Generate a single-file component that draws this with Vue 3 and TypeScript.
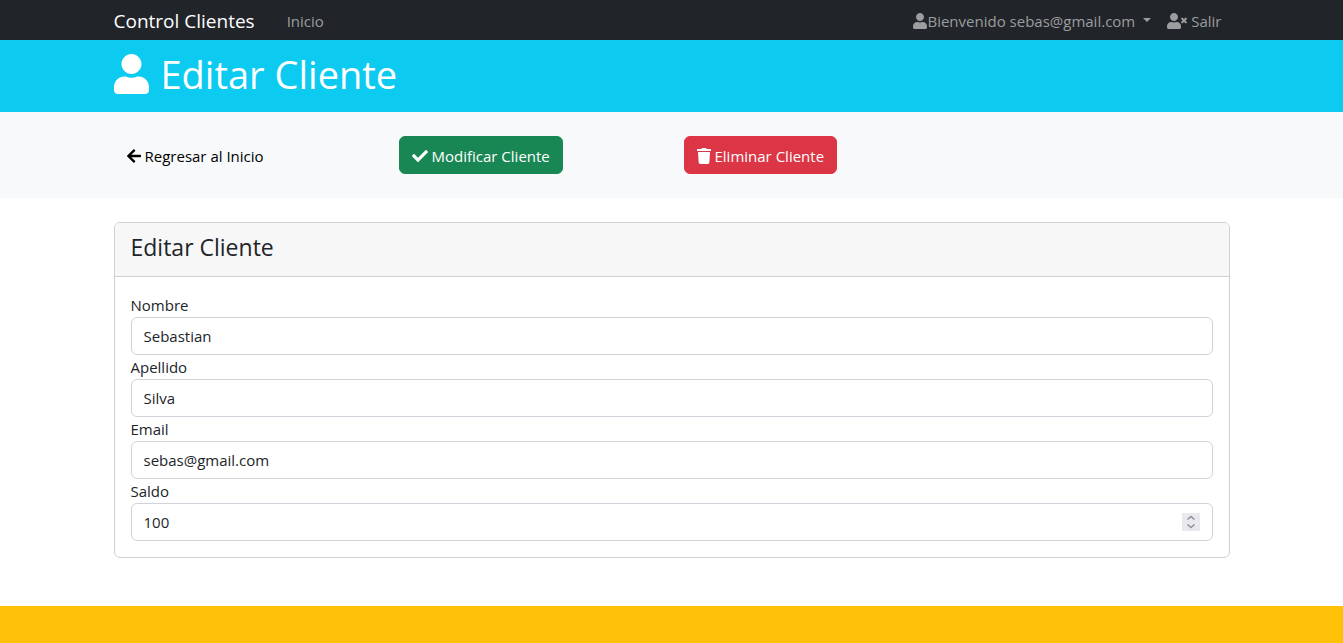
<script setup lang="ts">
import { reactive } from 'vue'

interface Cliente {
  nombre: string
  apellido: string
  email: string
  saldo: number
}

const cliente = reactive<Cliente>({
  nombre: 'Sebastian',
  apellido: 'Silva',
  email: 'sebas@gmail.com',
  saldo: 100,
})

const userPath =
  'M224 256c70.7 0 128-57.3 128-128S294.7 0 224 0 96 57.3 96 128s57.3 128 128 128zm89.6 32h-16.7c-22.2 10.2-46.9 16-72.9 16s-50.6-5.8-72.9-16h-16.7C60.2 288 0 348.2 0 422.4V464c0 26.5 21.5 48 48 48h352c26.5 0 48-21.5 48-48v-41.6c0-74.2-60.2-134.4-134.4-134.4z'
</script>

<template>
  <div class="page">
    <nav class="navbar">
      <div class="container navbar-row">
        <a class="brand" href="#">Control Clientes</a>
        <a class="nav-link" href="#">Inicio</a>
        <div class="nav-end">
          <button class="nav-link nav-user" type="button" aria-haspopup="true">
            <svg class="icon icon-user" viewBox="0 0 448 512" aria-hidden="true"><path :d="userPath" /></svg>
            <span>Bienvenido sebas@gmail.com</span>
            <span class="caret"></span>
          </button>
          <a class="nav-link nav-exit" href="#">
            <svg class="icon icon-exit" viewBox="0 0 640 512" aria-hidden="true">
              <path :d="userPath" />
              <path d="M589.6 240l45.6-45.6c6.3-6.3 6.3-16.5 0-22.8l-22.8-22.8c-6.3-6.3-16.5-6.3-22.8 0L544 194.4l-45.6-45.6c-6.3-6.3-16.5-6.3-22.8 0l-22.8 22.8c-6.3 6.3-6.3 16.5 0 22.8l45.6 45.6-45.6 45.6c-6.3 6.3-6.3 16.5 0 22.8l22.8 22.8c6.3 6.3 16.5 6.3 22.8 0l45.6-45.6 45.6 45.6c6.3 6.3 16.5 6.3 22.8 0l22.8-22.8c6.3-6.3 6.3-16.5 0-22.8L589.6 240z" />
            </svg>
            <span>Salir</span>
          </a>
        </div>
      </div>
    </nav>

    <header class="banner">
      <div class="container">
        <h1 class="title">
          <svg class="icon icon-title" viewBox="0 0 448 512" aria-hidden="true"><path :d="userPath" /></svg>
          <span>Editar Cliente</span>
        </h1>
      </div>
    </header>

    <section class="actions">
      <div class="container actions-grid">
        <div>
          <a class="btn btn-light" href="#">
            <svg class="icon icon-user" viewBox="0 0 448 512" aria-hidden="true">
              <path d="M257.5 445.1l-22.2 22.2c-9.4 9.4-24.6 9.4-33.9 0L7 273c-9.4-9.4-9.4-24.6 0-33.9L201.4 44.7c9.4-9.4 24.6-9.4 33.9 0l22.2 22.2c9.5 9.5 9.3 25-.4 34.3L136.6 216H424c13.3 0 24 10.7 24 24v32c0 13.3-10.7 24-24 24H136.6l120.5 114.8c9.8 9.3 10 24.8.4 34.3z" />
            </svg>
            <span>Regresar al Inicio</span>
          </a>
        </div>
        <div>
          <button class="btn btn-success" type="submit" form="cliente-form">
            <svg class="icon icon-check" viewBox="0 0 512 512" aria-hidden="true">
              <path d="M173.898 439.404l-166.4-166.4c-9.997-9.997-9.997-26.206 0-36.204l36.203-36.204c9.997-9.998 26.207-9.998 36.204 0L192 312.69 432.095 72.596c9.997-9.997 26.207-9.997 36.204 0l36.203 36.204c9.997 9.997 9.997 26.206 0 36.204l-294.4 294.401c-9.998 9.997-26.207 9.997-36.204-.001z" />
            </svg>
            <span>Modificar Cliente</span>
          </button>
        </div>
        <div>
          <button class="btn btn-danger" type="button">
            <svg class="icon icon-user" viewBox="0 0 448 512" aria-hidden="true">
              <path d="M432 32H312l-9.4-18.7A24 24 0 0 0 281.1 0H166.8a23.72 23.72 0 0 0-21.4 13.3L136 32H16A16 16 0 0 0 0 48v32a16 16 0 0 0 16 16h416a16 16 0 0 0 16-16V48a16 16 0 0 0-16-16zM53.2 467a48 48 0 0 0 47.9 45h245.8a48 48 0 0 0 47.9-45L416 128H32z" />
            </svg>
            <span>Eliminar Cliente</span>
          </button>
        </div>
      </div>
    </section>

    <main class="container">
      <div class="card">
        <div class="card-header"><h4 class="card-title">Editar Cliente</h4></div>
        <form id="cliente-form" class="card-body" @submit.prevent>
          <label for="nombre">Nombre</label>
          <input id="nombre" v-model="cliente.nombre" class="control" type="text" required />
          <label for="apellido">Apellido</label>
          <input id="apellido" v-model="cliente.apellido" class="control" type="text" required />
          <label for="email">Email</label>
          <input id="email" v-model="cliente.email" class="control" type="email" required />
          <label for="saldo">Saldo</label>
          <div class="number">
            <input id="saldo" v-model.number="cliente.saldo" class="control" type="number" required />
            <div class="spinner">
              <button type="button" aria-label="Aumentar saldo" @click="cliente.saldo++">
                <svg viewBox="0 0 18 9" aria-hidden="true"><path d="M5.5 6.5 9 3.5 12.5 6.5" /></svg>
              </button>
              <button type="button" aria-label="Reducir saldo" @click="cliente.saldo--">
                <svg viewBox="0 0 18 9" aria-hidden="true"><path d="M5.5 2.5 9 5.5 12.5 2.5" /></svg>
              </button>
            </div>
          </div>
        </form>
      </div>
    </main>

    <footer class="footer"></footer>
  </div>
</template>

<style>
body {
  margin: 0;
  background: #fff;
}
</style>

<style scoped>
.page {
  display: flex;
  flex-direction: column;
  min-height: 100vh;
  color: #212529;
  font-family: "Open Sans", "Noto Sans", sans-serif;
  font-size: 15px;
  line-height: 24px;
}

.page *,
.page *::before,
.page *::after {
  box-sizing: border-box;
}

.container {
  width: 100%;
  max-width: 1140px;
  margin: 0 auto;
  padding: 0 12px;
}

button,
input {
  font: inherit;
}

.icon {
  flex: none;
  height: 16px;
  fill: currentColor;
}

.icon-user {
  width: 14px;
}

.icon-check {
  width: 16px;
}

.icon-exit {
  width: 20px;
}

.navbar {
  padding-top: 2px;
  background: #212529;
}

.navbar-row {
  display: flex;
  align-items: center;
  height: 38px;
}

.brand {
  margin-right: 24px;
  color: #fff;
  font-size: 19px;
  text-decoration: none;
}

.nav-link {
  display: flex;
  align-items: center;
  padding: 0 8px;
  border: 0;
  background: none;
  color: #9b9d9e;
  text-decoration: none;
}

.nav-end {
  display: flex;
  margin-left: auto;
}

.caret {
  margin: 0 0 2px 8px;
  border-top: 4px solid;
  border-right: 4px solid transparent;
  border-left: 4px solid transparent;
}

.nav-exit {
  gap: 4px;
}

.banner {
  padding: 10px 0 14px;
  background: #0dcaf0;
  color: #fff;
}

.title {
  display: flex;
  align-items: center;
  gap: 12px;
  margin: 0;
  font-size: 38px;
  font-weight: 400;
  line-height: 48px;
}

.icon-title {
  width: 35px;
  height: 40px;
}

.actions {
  padding: 24px 0;
  background: #f8f9fa;
}

.actions-grid {
  display: grid;
  grid-template-columns: repeat(4, 1fr);
  column-gap: 24px;
}

.btn {
  display: inline-flex;
  align-items: center;
  gap: 4px;
  padding: 7px 12px 5px;
  border: 1px solid transparent;
  border-radius: 6px;
  color: #fff;
  text-decoration: none;
  white-space: nowrap;
  vertical-align: top;
}

.btn-light {
  color: #000;
}

.btn-success {
  background: #198754;
  border-color: #198754;
}

.btn-danger {
  background: #dc3545;
  border-color: #dc3545;
}

.card {
  margin: 24px 0 48px;
  border: 1px solid #d0d0d1;
  border-radius: 6px;
  background: #fff;
}

.card-header {
  padding: 10px 16px 14px;
  border-bottom: 1px solid #d0d0d1;
  border-radius: 5px 5px 0 0;
  background: #f7f7f7;
}

.card-title {
  margin: 0;
  font-size: 23px;
  font-weight: 400;
  line-height: 29px;
}

.card-body {
  padding: 16px;
}

label {
  display: block;
}

.control {
  display: block;
  width: 100%;
  height: 38px;
  padding: 6px 12px;
  border: 1px solid #ced4da;
  border-radius: 6px;
  background: #fff;
  color: #212529;
  appearance: none;
}

.control[type="number"] {
  appearance: textfield;
}

.number {
  position: relative;
}

.spinner {
  position: absolute;
  top: 10px;
  right: 13px;
  width: 18px;
  height: 18px;
  background: #e9e9ed;
}

.spinner button {
  display: block;
  width: 18px;
  height: 9px;
  padding: 0;
  border: 0;
  background: none;
}

.spinner svg {
  display: block;
  width: 18px;
  height: 9px;
  fill: none;
  stroke: #8f8f9d;
  stroke-width: 1.6;
}

.footer {
  flex: 1 0 24px;
  background: #ffc107;
}
</style>
